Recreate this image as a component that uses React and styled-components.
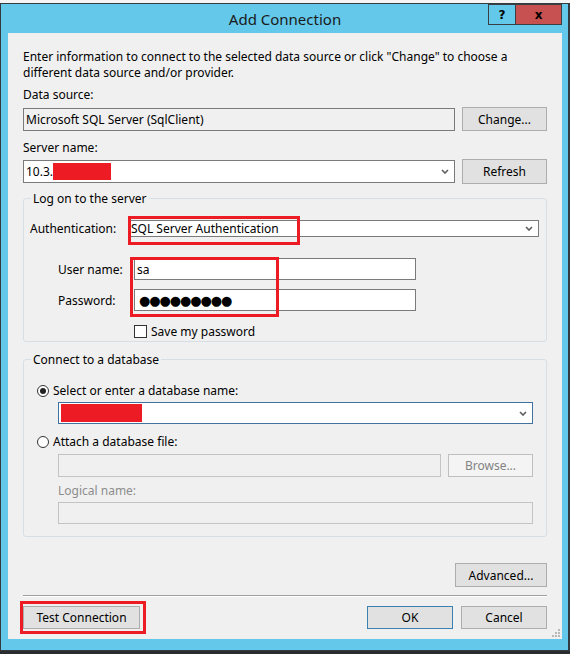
import React from "react";
import styled, { createGlobalStyle } from "styled-components";

const GlobalStyle = createGlobalStyle`
  html, body {
    margin: 0;
    padding: 0;
  }
  body {
    background: #2a2c30;
    font-family: "Noto Sans", "Liberation Sans", sans-serif;
  }
  #root {
    width: 570px;
    height: 654px;
    overflow: hidden;
  }
`;

const Screen = styled.div`
  width: 570px;
  height: 654px;
  display: flex;
  flex-direction: column;
  background: #2a2c30;
`;

const Backdrop = styled.div`
  flex: none;
  height: 3px;
  background: #f4f4f4;
`;

const Window = styled.div`
  flex: none;
  height: 648px;
  box-sizing: border-box;
  border: 1px solid #333a40;
  border-right-width: 2px;
  background: #63c8e9;
  padding: 0 6px 11px 7px;
  display: flex;
  flex-direction: column;
`;

const TitleBar = styled.div`
  flex: none;
  height: 29px;
  display: grid;
  grid-template-columns: 1fr auto 1fr;
  align-items: center;
`;

const Title = styled.div`
  grid-column: 2;
  font-size: 15px;
  color: #1a1a1a;
  padding-top: 1px;
`;

const Caption = styled.div`
  grid-column: 3;
  justify-self: end;
  align-self: start;
  display: flex;
`;

const CaptionButton = styled.div`
  width: ${(p) => p.$w}px;
  height: 21px;
  box-sizing: border-box;
  border: 1px solid #3a3f44;
  background: ${(p) => p.$bg};
  display: flex;
  align-items: center;
  justify-content: center;
  font: bold 12px "DejaVu Sans", sans-serif;
  color: #000;
  & + & {
    border-left: none;
  }
`;

const Client = styled.div`
  flex: 1;
  position: relative;
  background: #f0f0f0;
  padding: 16px 15px 0 15px;
  display: flex;
  flex-direction: column;
  font-size: 12px;
  line-height: 15px;
  color: #000;
`;

const Intro = styled.p`
  margin: 0;
  line-height: 16px;
`;

const FieldLabel = styled.div`
  margin-top: ${(p) => p.$mt || 0}px;
  color: ${(p) => (p.$disabled ? "#8d8d8d" : "#000")};
`;

const Row = styled.div`
  display: flex;
  align-items: center;
  justify-content: ${(p) => (p.$end ? "flex-end" : "flex-start")};
  gap: ${(p) => p.$gap ?? 7}px;
  margin-top: ${(p) => p.$mt || 0}px;
  padding-left: ${(p) => p.$indent || 0}px;
  padding-right: ${(p) => p.$right || 0}px;
`;

const TextBox = styled.div`
  position: relative;
  box-sizing: border-box;
  flex: ${(p) => (p.$w ? "none" : "1")};
  width: ${(p) => (p.$w ? `${p.$w}px` : "auto")};
  height: ${(p) => p.$h || 23}px;
  border: 1px solid ${(p) => p.$border || "#7a7a7a"};
  background: ${(p) => p.$bg || "#fff"};
  padding: 0 5px 0 2px;
  display: flex;
  align-items: center;
  white-space: nowrap;
`;

const BoxText = styled.span`
  flex: 1;
  display: flex;
  align-items: center;
`;

const Redacted = styled.span`
  display: inline-block;
  width: ${(p) => p.$w}px;
  height: ${(p) => p.$h}px;
  background: #ed1c24;
`;

const Dots = styled.span`
  font-family: "DejaVu Sans", sans-serif;
  font-size: 13px;
  letter-spacing: -1.1px;
  padding-left: 2px;
`;

const Button = styled.div`
  flex: none;
  box-sizing: border-box;
  width: ${(p) => p.$w}px;
  height: ${(p) => p.$h || 24}px;
  border: 1px solid ${(p) => (p.$default ? "#3c7fb1" : p.$disabled ? "#bfbfbf" : "#adadad")};
  background: ${(p) => (p.$disabled ? "#f4f4f4" : "#e1e1e1")};
  color: ${(p) => (p.$disabled ? "#838383" : "#000")};
  display: flex;
  align-items: center;
  justify-content: center;
`;

const Group = styled.fieldset`
  margin: ${(p) => p.$mt}px 0 0;
  padding: 0;
  min-width: 0;
  border: 1px solid #d5dfe5;
  border-radius: 3px;
`;

const GroupTitle = styled.legend`
  margin-left: 7px;
  padding: 0 2px;
  line-height: 15px;
`;

const GroupBody = styled.div`
  display: flex;
  flex-direction: column;
  padding: ${(p) => p.$pad};
`;

const Label = styled.span`
  flex: none;
  width: ${(p) => p.$w}px;
`;

const Anchor = styled.div`
  position: relative;
  display: flex;
  flex-direction: column;
  flex: ${(p) => (p.$grow ? "1" : "none")};
  margin-top: ${(p) => p.$mt || 0}px;
`;

const Highlight = styled.div`
  position: absolute;
  box-sizing: border-box;
  top: ${(p) => p.$top}px;
  left: ${(p) => p.$left}px;
  width: ${(p) => p.$w}px;
  height: ${(p) => p.$h}px;
  border: 3px solid #ed1c24;
  pointer-events: none;
`;

const Check = styled.span`
  flex: none;
  box-sizing: border-box;
  width: 13px;
  height: 13px;
  border: 1px solid #333;
  background: #fff;
`;

const Radio = styled.span`
  flex: none;
  box-sizing: border-box;
  width: 12px;
  height: 12px;
  border-radius: 50%;
  border: 1px solid #333;
  background: #fff;
  display: flex;
  align-items: center;
  justify-content: center;
  &::after {
    content: "";
    width: 6px;
    height: 6px;
    border-radius: 50%;
    background: ${(p) => (p.$checked ? "#222" : "transparent")};
  }
`;

const Separator = styled.div`
  margin-top: 8px;
  border-top: 1px solid #a0a0a0;
  border-bottom: 1px solid #fff;
`;

const Footer = styled.div`
  display: flex;
  justify-content: space-between;
  margin-top: 9px;
`;

const ButtonGroup = styled.div`
  display: flex;
  gap: 8px;
`;

const Grip = styled.svg`
  position: absolute;
  right: 1px;
  bottom: 1px;
`;

function Chevron() {
  return (
    <svg width="8" height="5" viewBox="0 0 8 5">
      <path d="M1 1 L4 4 L7 1" fill="none" stroke="#5d5d5d" strokeWidth="1.6" />
    </svg>
  );
}

function Combo({ children, border, h }) {
  return (
    <TextBox $border={border} $h={h}>
      <BoxText>{children}</BoxText>
      <Chevron />
    </TextBox>
  );
}

export default function App() {
  return (
    <>
      <GlobalStyle />
      <Screen>
        <Backdrop />
        <Window>
          <TitleBar>
            <Title>Add Connection</Title>
            <Caption>
              <CaptionButton $w={28} $bg="#63c8e9">?</CaptionButton>
              <CaptionButton $w={46} $bg="#c75050">x</CaptionButton>
            </Caption>
          </TitleBar>
          <Client>
            <Intro>
              Enter information to connect to the selected data source or click "Change" to choose a
              <br />
              different data source and/or provider.
            </Intro>

            <FieldLabel $mt={6}>Data source:</FieldLabel>
            <Row $mt={5}>
              <TextBox $bg="#f0f0f0">Microsoft SQL Server (SqlClient)</TextBox>
              <Button $w={85}>Change...</Button>
            </Row>

            <FieldLabel $mt={9}>Server name:</FieldLabel>
            <Row $mt={4}>
              <Combo>
                10.3.<Redacted $w={58} $h={17} />
              </Combo>
              <Button $w={85} $h={25}>Refresh</Button>
            </Row>

            <Group $mt={7}>
              <GroupTitle>Log on to the server</GroupTitle>
              <GroupBody $pad="14px 0 2px 0">
                <Row $gap={0} $indent={6} $right={7}>
                  <Label $w={98}>Authentication:</Label>
                  <Anchor $grow>
                    <Combo>SQL Server Authentication</Combo>
                    <Highlight $top={-4} $left={0} $w={172} $h={29} />
                  </Anchor>
                </Row>
                <Anchor $mt={21}>
                  <Row $gap={0} $indent={34}>
                    <Label $w={76}>User name:</Label>
                    <TextBox $w={282} $h={22}>sa</TextBox>
                  </Row>
                  <Row $gap={0} $indent={34} $mt={9}>
                    <Label $w={76}>Password:</Label>
                    <TextBox $w={282} $h={22}>
                      <Dots>●●●●●●●●●</Dots>
                    </TextBox>
                  </Row>
                  <Highlight $top={-1} $left={106} $w={149} $h={60} />
                </Anchor>
                <Row $gap={4} $indent={110} $mt={13}>
                  <Check />
                  <span>Save my password</span>
                </Row>
              </GroupBody>
            </Group>

            <Group $mt={10}>
              <GroupTitle>Connect to a database</GroupTitle>
              <GroupBody $pad="16px 0 12px 0">
                <Row $gap={4} $indent={13}>
                  <Radio $checked />
                  <span>Select or enter a database name:</span>
                </Row>
                <Row $indent={34} $right={13} $mt={4}>
                  <Combo border="#41729f" h={22}>
                    <Redacted $w={81} $h={18} />
                  </Combo>
                </Row>
                <Row $gap={4} $indent={13} $mt={10}>
                  <Radio />
                  <span>Attach a database file:</span>
                </Row>
                <Row $indent={34} $right={13} $mt={5}>
                  <TextBox $bg="#f0f0f0" $border="#c4c4c4" />
                  <Button $w={85} $h={23} $disabled>
                    Browse...
                  </Button>
                </Row>
                <Row $indent={34} $mt={6}>
                  <FieldLabel $disabled>Logical name:</FieldLabel>
                </Row>
                <Row $indent={34} $right={13} $mt={4}>
                  <TextBox $bg="#f0f0f0" $border="#c4c4c4" $h={22} />
                </Row>
              </GroupBody>
            </Group>

            <Row $mt={26} $end>
              <Button $w={92}>Advanced...</Button>
            </Row>
            <Separator />
            <Footer>
              <Anchor>
                <Button $w={117} $h={23}>Test Connection</Button>
                <Highlight $top={-5} $left={-3} $w={126} $h={33} />
              </Anchor>
              <ButtonGroup>
                <Button $w={86} $h={23} $default>
                  OK
                </Button>
                <Button $w={86} $h={23}>Cancel</Button>
              </ButtonGroup>
            </Footer>
            <Grip width="10" height="10" viewBox="0 0 10 10">
              {[
                [8, 2],
                [5, 5],
                [8, 5],
                [2, 8],
                [5, 8],
                [8, 8],
              ].map(([x, y]) => (
                <rect key={`${x}-${y}`} x={x - 1} y={y - 1} width="2" height="2" fill="#b8b8b8" />
              ))}
            </Grip>
          </Client>
        </Window>
      </Screen>
    </>
  );
}
